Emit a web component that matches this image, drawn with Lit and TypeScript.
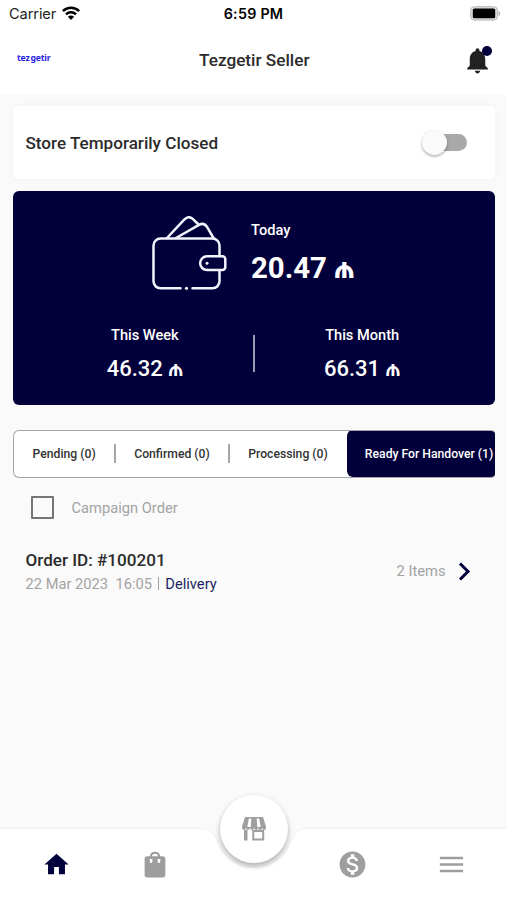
import { LitElement, html, css, svg } from "lit";
import { customElement, property } from "lit/decorators.js";

const NAVY = "#02003b";

@customElement("status-bar")
class StatusBar extends LitElement {
  static styles = css`
    :host { display: grid; grid-template-columns: 1fr auto 1fr; align-items: center; height: 27px; padding: 0 8px 0 9px; color: #111; }
    .left { display: flex; align-items: center; gap: 6px; font: 400 14.6px Inter, sans-serif; letter-spacing: -0.1px; color: #222; }
    .left svg { margin-bottom: 1px; }
    .time { font: 600 14.3px Inter, sans-serif; letter-spacing: 0.25px; color: #000; margin-right: 1px; }
    .right { display: flex; justify-content: flex-end; margin-right: -2px; }
    svg { display: block; }
  `;
  render() {
    return html`
      <div class="left"><span>Carrier</span>
        <svg width="18" height="14" viewBox="0 0 18 14" fill="none" stroke="#000" stroke-width="2.5">
          <path d="M.9 5.1a11.5 11.5 0 0 1 16.2 0"></path>
          <path d="M4 8.3a7.1 7.1 0 0 1 10 0"></path>
          <path d="M9 14L5.9 10.8a4.4 4.4 0 0 1 6.2 0z" fill="#000" stroke="none"></path>
        </svg>
      </div>
      <div class="time">6:59 PM</div>
      <div class="right">
        <svg width="31" height="15" viewBox="0 0 31 15">
          <rect x=".7" y=".7" width="26.8" height="13.4" rx="3.8" fill="#dedede" stroke="#b5b5b5" stroke-width="1"></rect>
          <rect x="2.800" y="2.500" width="22.400" height="9.800" rx="1.600" fill="#000"></rect>
          <path d="M28.600 5v5c2-.7 2-4.300 0-5z" fill="#aaa"></path>
        </svg>
      </div>`;
  }
}

@customElement("app-header")
class AppHeader extends LitElement {
  static styles = css`
    :host { display: grid; grid-template-columns: 1fr auto 1fr; align-items: center; height: 67px; padding: 0 14px 0 17px; }
    .logo { font: 700 8.600px "Noto Sans", sans-serif; color: #2420e0; letter-spacing: -0.150px; word-spacing: -1.200px; padding-bottom: 5px; }
    .title { font: 500 17.2px Roboto, sans-serif; color: #2b2b2b; padding: 0 1.500px 2px 0; }
    .bell { position: relative; justify-self: end; width: 31px; height: 31px; margin-bottom: 1px; }
    .bell svg { display: block; }
    .dot { position: absolute; right: 1px; top: 1px; width: 10px; height: 10px; border-radius: 50%; background: #02003b; }
  `;
  render() {
    return html`
      <div class="logo">tez getir</div>
      <div class="title">Tezgetir Seller</div>
      <div class="bell">
        <svg width="31" height="31" viewBox="0 0 24 24" fill="#212121"><path d="M12 22c1.100 0 2-.9 2-2h-4c0 1.100.89 2 2 2zm6-6v-5c0-3.070-1.640-5.640-4.500-6.320V4c0-.83-.67-1.500-1.500-1.500s-1.500.67-1.500 1.500v.68C7.630 5.360 6 7.920 6 11v5l-2 2v1h16v-1l-2-2z"></path></svg>
        <i class="dot"></i>
      </div>`;
  }
}

@customElement("store-toggle")
class StoreToggle extends LitElement {
  static styles = css`
    :host { display: flex; align-items: center; justify-content: space-between; box-sizing: border-box; height: 73px; padding: 0 28px 0 12.500px; background: #fff; border-radius: 5px; box-shadow: 0 0 6px 1px rgba(0, 0, 0, 0.035); font: 500 17.1px Roboto, sans-serif; color: #2b2b2b; }
    .switch { position: relative; width: 41px; height: 17px; border-radius: 9px; background: #a9a9a9; }
    .thumb { position: absolute; left: -4px; top: -4.500px; width: 25px; height: 25px; border-radius: 50%; background: #fafafa; box-shadow: 0 1.500px 3px rgba(0, 0, 0, 0.33); }
  `;
  render() {
    return html`<span>Store Temporarily Closed</span><div class="switch"><i class="thumb"></i></div>`;
  }
}

@customElement("earnings-card")
class EarningsCard extends LitElement {
  static styles = css`
    :host { display: flex; flex-direction: column; box-sizing: border-box; height: 214px; padding-top: 25px; background: #02003b; border-radius: 6px; color: #fff; font-family: Roboto, sans-serif; }
    .today { display: flex; padding-left: 139px; gap: 24px; height: 108px; }
    .wallet { display: block; }
    .label { font-size: 14.600px; font-weight: 500; line-height: 18px; }
    .big { font-size: 29.400px; font-weight: 700; line-height: 36px; margin-top: 11.500px; white-space: nowrap; }
    .today .label { margin-top: 4.500px; }
    .row { display: grid; grid-template-columns: 1fr 2px 1fr; }
    .cell { display: flex; flex-direction: column; align-items: center; padding-top: 2px; }
    .cell:first-child { margin-left: 24px; }
    .cell:last-child { margin-right: 25px; }
    .value { font-size: 22px; font-weight: 500; line-height: 26px; margin-top: 12px; white-space: nowrap; }
    .rule { height: 37px; margin-top: 11px; background: #9c9bb0; }
  `;
  render() {
    return html`
      <div class="today">
        <svg class="wallet" width="75" height="75" viewBox="0 0 75 75" fill="none" stroke="#f4f4ff" stroke-width="2.5" stroke-linecap="round" stroke-linejoin="round">
          <path d="M28.500 72.300H8.500A7 7 0 0 1 1.500 65.300V29.500A7 7 0 0 1 8.500 22.500H60.500A7 7 0 0 1 67.500 29.500V40M67.500 54.500V65.300A7 7 0 0 1 60.500 72.300H40.500"></path>
          <path d="M15 22L32.200 3.700C35 .8 38.300.6 41 3.200L46.500 8.500M24 22L47 8.800C50.300 7 53.300 8 55.300 11.300L61.500 22"></path>
          <path d="M70.500 40.300H55A6.800 6.800 0 0 0 55 54H70.500A2.800 2.800 0 0 0 73.300 51.200V43.100A2.800 2.800 0 0 0 70.500 40.300Z"></path>
          <circle cx="55" cy="47.200" r="1.500" fill="#f4f4ff" stroke="none"></circle>
          <circle cx="34.500" cy="72.300" r="1.600" fill="#f4f4ff" stroke="none"></circle>
        </svg>
        <div><div class="label">Today</div><div class="big">20.47 ₼</div></div>
      </div>
      <div class="row">
        <div class="cell"><div class="label">This Week</div><div class="value">46.32 ₼</div></div>
        <div class="rule"></div>
        <div class="cell"><div class="label">This Month</div><div class="value">66.31 ₼</div></div>
      </div>`;
  }
}

@customElement("order-tabs")
class OrderTabs extends LitElement {
  static styles = css`
    :host { display: flex; align-items: center; box-sizing: border-box; height: 48.500px; border: 1px solid #a5a5a5; border-right: 0; border-radius: 6px 4px 4px 6px; background: #fff; overflow: hidden; font: 500 12.200px Roboto, sans-serif; color: #333; white-space: nowrap; }
    .tab { padding: 1px 18.600px 0; flex: none; }
    .line { flex: none; width: 1.300px; height: 19px; background: #a5a5a5; }
    .active { flex: none; display: flex; align-items: center; box-sizing: border-box; height: 47px; margin-left: 0.500px; padding: 1px 18px 0; border-radius: 6px; background: #02003b; color: #fff; }
  `;
  render() {
    return html`
      <div class="tab">Pending (0)</div><i class="line"></i>
      <div class="tab">Confirmed (0)</div><i class="line"></i>
      <div class="tab">Processing (0)</div>
      <div class="active">Ready For Handover (1)</div>`;
  }
}

@customElement("order-list")
class OrderList extends LitElement {
  static styles = css`
    :host { display: block; font-family: Roboto, sans-serif; }
    .filter { display: flex; align-items: center; gap: 18px; height: 59px; padding-left: 18px; font-size: 14.700px; color: #a3a3a3; }
    .box { box-sizing: border-box; width: 22.500px; height: 22.500px; border: 2px solid #757575; border-radius: 1px; }
    .order { display: flex; justify-content: space-between; align-items: center; padding: 12px 23px 0 12.500px; }
    .id { font-size: 17.100px; font-weight: 500; line-height: 22px; color: #2b2b2b; }
    .meta { display: flex; font-size: 14.700px; line-height: 18px; margin-top: 4px; color: #a3a3a3; white-space: pre; }
    .bar { width: 1.300px; height: 13px; margin: 2px 6px 0; background: #a3a3a3; }
    .kind { color: #211e63; }
    .items { display: flex; align-items: center; gap: 11px; font-size: 14.700px; color: #a3a3a3; }
    svg { display: block; }
  `;
  render() {
    return html`
      <div class="filter"><i class="box"></i><span>Campaign Order</span></div>
      <div class="order">
        <div>
          <div class="id">Order ID: #100201</div>
          <div class="meta"><span>22 Mar 2023  16:05</span><i class="bar"></i><span class="kind">Delivery</span></div>
        </div>
        <div class="items"><span>2 Items</span>
          <svg width="15" height="19" viewBox="0 0 15 19" fill="none" stroke=${NAVY} stroke-width="3"><path d="M3 1.500L11 9.500L3 17.500"></path></svg>
        </div>
      </div>`;
  }
}

const icons: Record<string, unknown> = {
  home: svg`<path d="M10 20v-6h4v6h5v-8h3L12 3 2 12h3v8z"></path>`,
  bag: svg`<path fill-rule="evenodd" d="M18.200 4.900H16.200C15.900 2.700 14.500 1.300 12 1.300S8.100 2.700 7.800 4.900H5.800C4.300 4.900 3.700 5.600 3.700 6.900V19.900C3.700 21.200 4.400 21.900 5.800 21.900H18.200C19.600 21.900 20.300 21.200 20.300 19.900V6.900C20.300 5.600 19.600 4.900 18.200 4.900ZM9.500 4.900C9.700 3.600 10.600 2.900 12 2.900S14.300 3.600 14.500 4.900ZM7.800 7.100H9.900V9.200Q9.900 10.400 8.850 10.400T7.800 9.200ZM14.100 7.100H16.200V9.200Q16.200 10.400 15.150 10.400T14.100 9.200Z"></path>`,
  money: svg`<path d="M12 2C6.480 2 2 6.480 2 12s4.480 10 10 10 10-4.480 10-10S17.520 2 12 2zm1.410 16.090V20h-2.670v-1.930c-1.710-.36-3.160-1.460-3.270-3.400h1.960c.1 1.050.82 1.870 2.650 1.870 1.960 0 2.400-.98 2.400-1.590 0-.83-.44-1.610-2.670-2.140-2.480-.6-4.180-1.620-4.180-3.670 0-1.720 1.390-2.840 3.110-3.210V4h2.670v1.950c1.860.45 2.790 1.860 2.850 3.390H14.300c-.05-1.110-.64-1.870-2.220-1.870-1.500 0-2.400.68-2.400 1.640 0 .84.65 1.390 2.670 1.910s4.180 1.390 4.180 3.910c-.01 1.830-1.380 2.830-3.120 3.160z"></path>`,
  menu: svg`<path d="M3 18h18v-2H3v2zm0-5h18v-2H3v2zm0-7v2h18V6H3z"></path>`,
};

@customElement("nav-icon")
class NavIcon extends LitElement {
  @property() name = "home";
  @property({ type: Number }) size = 31;
  static styles = css`
    :host { display: flex; align-items: center; justify-content: center; }
    svg { display: block; fill: currentColor; }
  `;
  render() {
    return html`<svg width=${this.size} height=${this.size} viewBox="0 0 24 24">${icons[this.name]}</svg>`;
  }
}

@customElement("bottom-nav")
class BottomNav extends LitElement {
  static styles = css`
    :host { display: block; position: relative; height: 71px; }
    .shape { position: absolute; left: 0; bottom: 0; display: block; overflow: visible; filter: drop-shadow(0 0 1.500px rgba(0, 0, 0, 0.07)); }
    .row { position: relative; display: grid; grid-template-columns: 112px 85px 1fr 85px 112px; height: 71px; color: #9e9e9e; }
    .active { color: #02003b; }
    .fab { position: absolute; left: 219.700px; top: -34.500px; width: 68.500px; height: 68.500px; border-radius: 50%; background: #fff; display: flex; align-items: center; justify-content: center; box-shadow: 0 3.500px 5px rgba(0, 0, 0, 0.24), 0 1px 6px rgba(0, 0, 0, 0.08); }
  `;
  render() {
    return html`
      <svg class="shape" width="507" height="71" viewBox="0 0 507 71"><path fill="#fff" d="M0 0H198C208 0 213 3 217 13A39.200 39.200 0 0 0 291 13C295 3 300 0 310 0H507V71H0Z"></path></svg>
      <div class="row">
        <nav-icon class="active" name="home" size="29"></nav-icon>
        <nav-icon name="bag" size="30"></nav-icon>
        <span></span>
        <nav-icon name="money" size="31"></nav-icon>
        <nav-icon name="menu" size="31"></nav-icon>
      </div>
      <div class="fab">
        <svg width="26" height="24" viewBox="0 0 26 24" fill="#9e9fa1">
          <path fill-rule="evenodd" d="M4 0H22L25 9.500V11.500H1V9.500ZM7.800 1.600L6.300 10H9.800L10.300 1.600ZM15.700 1.600L16.200 10H19.700L18.200 1.600Z"></path>
          <path d="M1.500 11.500H24.500" stroke="#9e9fa1" stroke-width="2.400" stroke-dasharray="2.600 1.500"></path>
          <path fill-rule="evenodd" d="M3 12.800H6.500V23.500H3ZM11.300 12.800H23.200V23.500H11.300ZM13.300 15V21.500H21.200V15Z"></path>
        </svg>
      </div>`;
  }
}

@customElement("app-root")
class AppRoot extends LitElement {
  static styles = css`
    :host { display: flex; flex-direction: column; width: 507px; height: 900px; overflow: hidden; background: #fafafa; }
    .top { background: #fff; height: 94.500px; }
    main { flex: 1; display: flex; flex-direction: column; padding: 11.500px 12.500px 0 13px; }
    earnings-card { margin-top: 12px; }
    order-tabs { margin-top: 24.500px; }
  `;
  render() {
    return html`
      <div class="top"><status-bar></status-bar><app-header></app-header></div>
      <main>
        <store-toggle></store-toggle>
        <earnings-card></earnings-card>
        <order-tabs></order-tabs>
        <order-list></order-list>
      </main>
      <bottom-nav></bottom-nav>`;
  }
}
